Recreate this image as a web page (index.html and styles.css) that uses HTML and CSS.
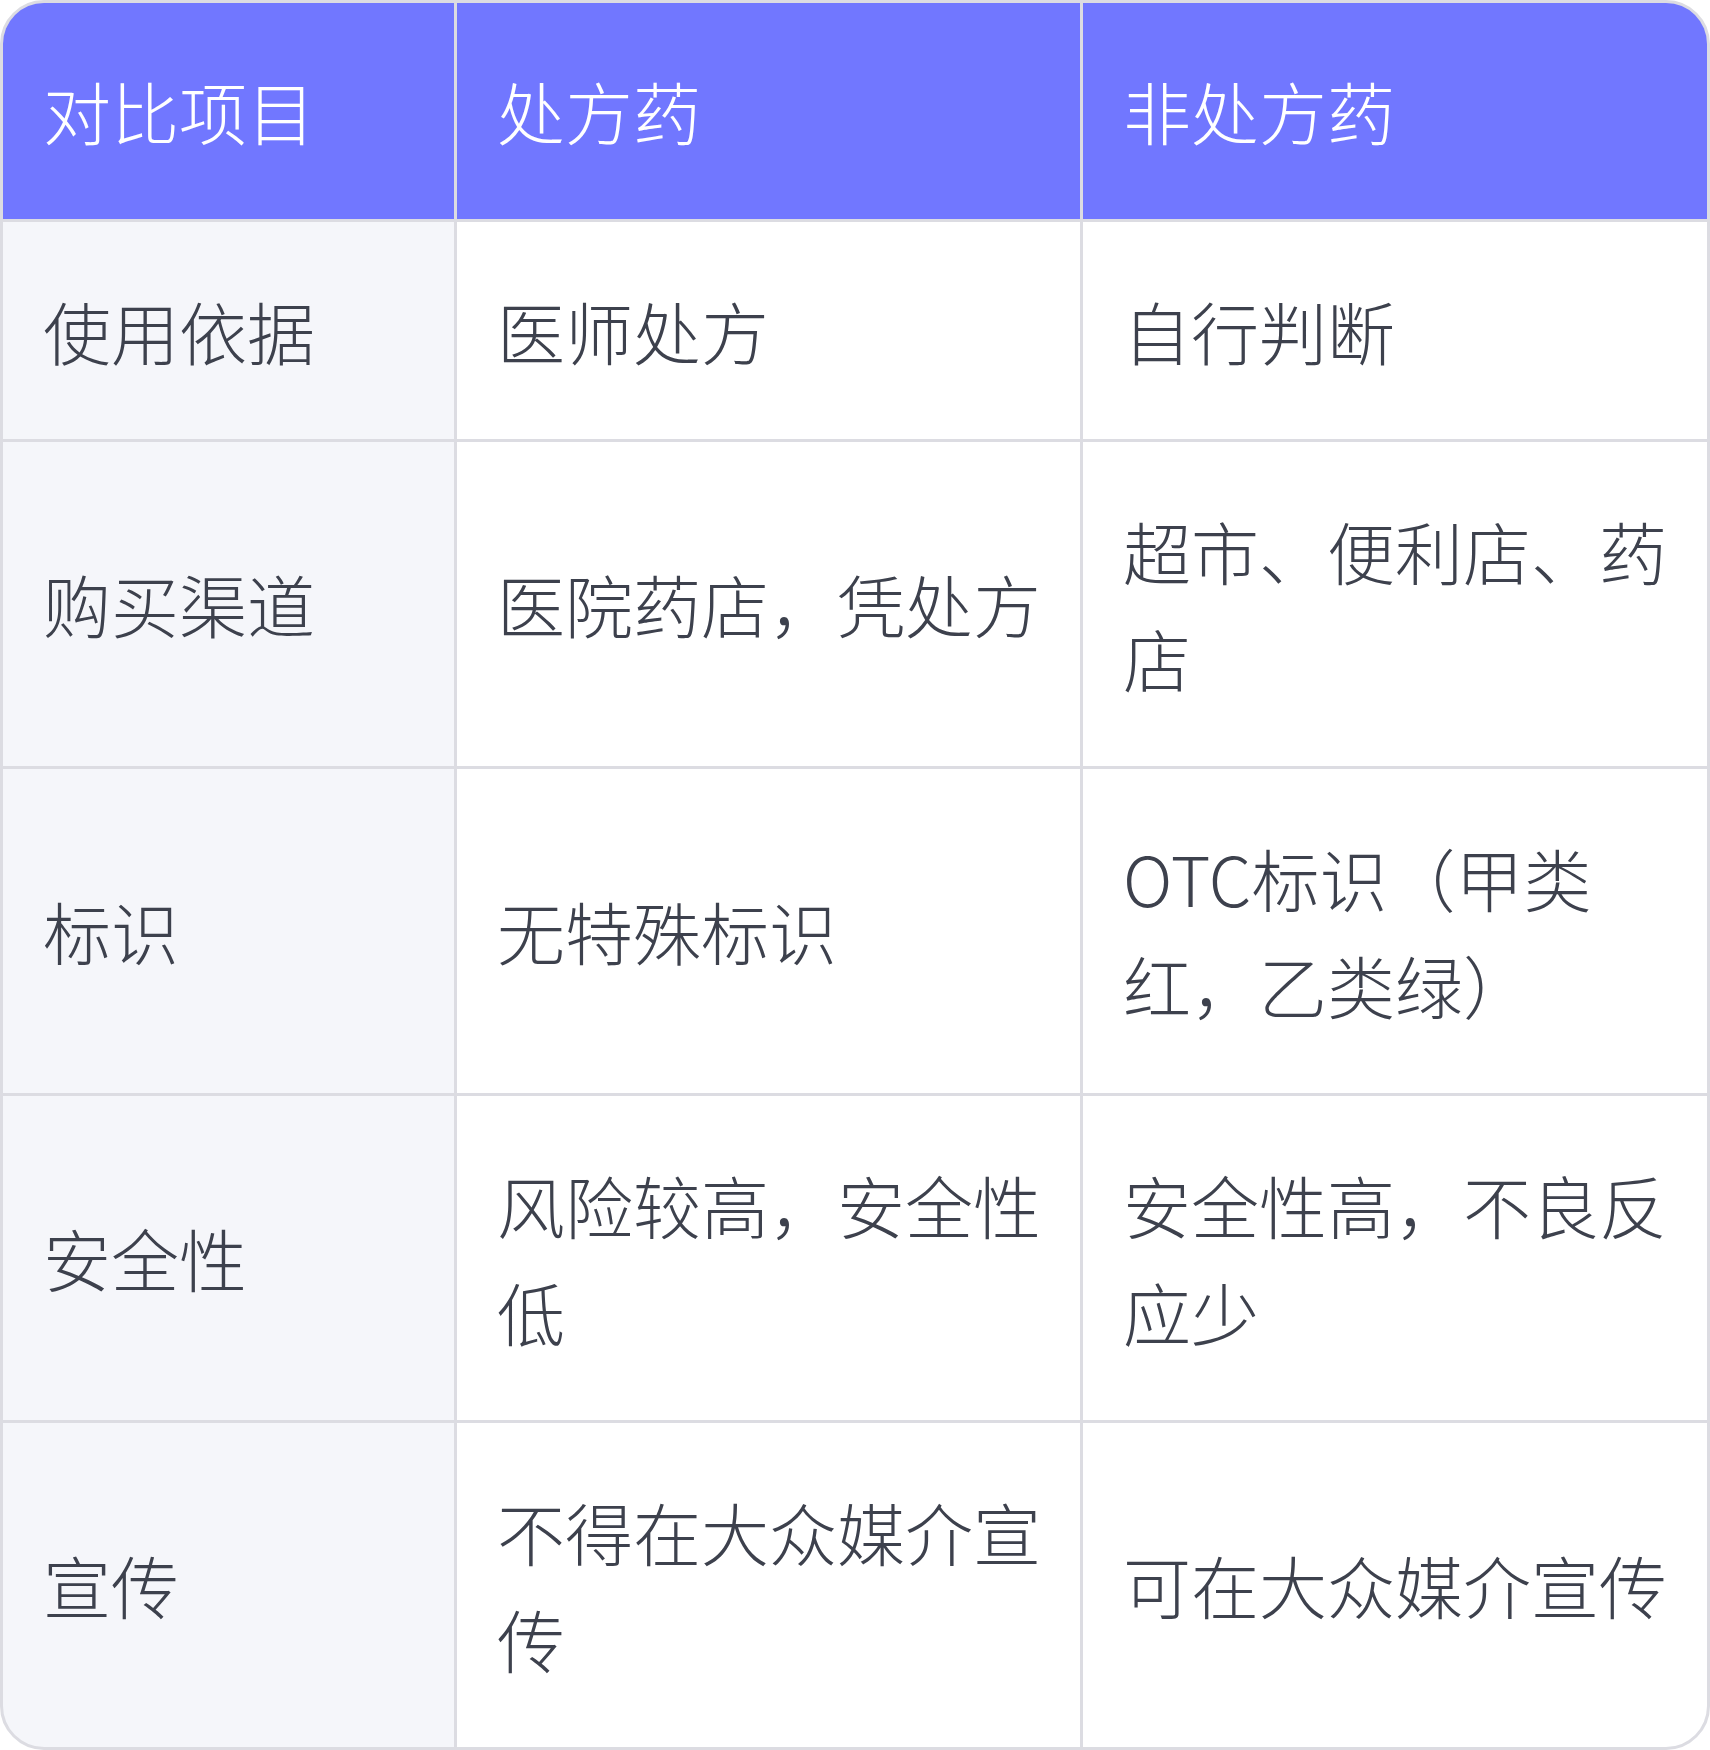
FILE: index.html
```html
<!DOCTYPE html>
<html lang="zh-CN">
<head>
<meta charset="utf-8">
<title>处方药与非处方药对比</title>
<link rel="stylesheet" href="styles.css">
</head>
<body>
<div class="table">
  <div class="cell head">对比项目</div>
  <div class="cell head">处方药</div>
  <div class="cell head">非处方药</div>

  <div class="cell key">使用依据</div>
  <div class="cell">医师处方</div>
  <div class="cell">自行判断</div>

  <div class="cell key">购买渠道</div>
  <div class="cell">医院药店，凭处方</div>
  <div class="cell">超市、便利店、药店</div>

  <div class="cell key">标识</div>
  <div class="cell">无特殊标识</div>
  <div class="cell">OTC标识（甲类红，乙类绿）</div>

  <div class="cell key">安全性</div>
  <div class="cell">风险较高，安全性低</div>
  <div class="cell">安全性高，不良反应少</div>

  <div class="cell key">宣传</div>
  <div class="cell">不得在大众媒介宣传</div>
  <div class="cell">可在大众媒介宣传</div>
</div>
</body>
</html>
```

FILE: styles.css
```css
html, body {
  margin: 0;
  padding: 0;
  overflow: hidden;
  background: #ffffff;
}

.table {
  box-sizing: border-box;
  width: 1710px;
  height: 1750px;
  display: grid;
  grid-template-columns: 451px 623px 624px;
  grid-template-rows: 216px 217px 1fr 1fr 1fr 1fr;
  gap: 3px;
  background: #dcdce2;
  border: 3px solid #dcdce2;
  border-radius: 44px;
  overflow: hidden;
  font-family: "Noto Sans CJK SC", "Noto Sans", sans-serif;
  font-size: 68px;
  line-height: 107.5px;
  color: #3d414d;
}

.cell {
  display: flex;
  align-items: center;
  padding: 0 36px 0 40px;
  background: #ffffff;
  font-weight: 300;
}

.head {
  background: #7177ff;
  color: #ffffff;
}

.key {
  background: #f5f6fa;
}
```
